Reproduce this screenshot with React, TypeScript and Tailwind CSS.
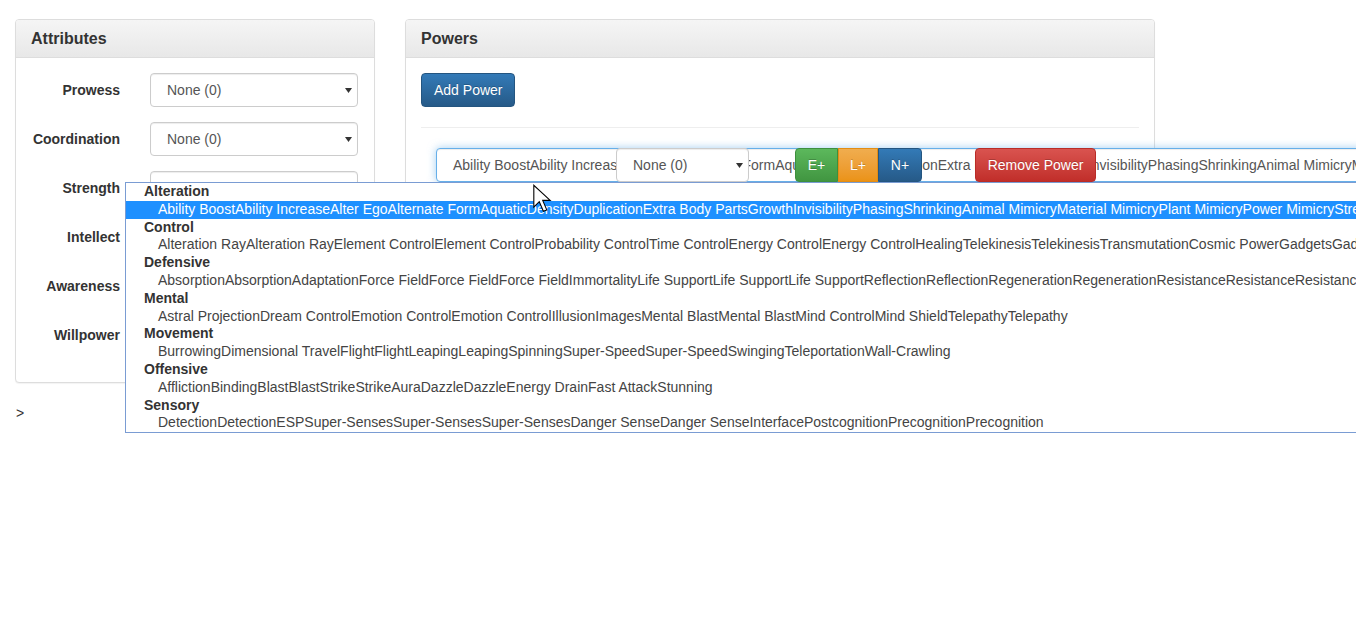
import React from "react";

const attrs = ["Prowess", "Coordination", "Strength", "Intellect", "Awareness", "Willpower"];

const groups: { label: string; items: string }[] = [
  {
    label: "Alteration",
    items:
      "Ability BoostAbility IncreaseAlter EgoAlternate FormAquaticDensityDuplicationExtra Body PartsGrowthInvisibilityPhasingShrinkingAnimal MimicryMaterial MimicryPlant MimicryPower MimicryStretchingSize ChangeTransformation",
  },
  {
    label: "Control",
    items:
      "Alteration RayAlteration RayElement ControlElement ControlProbability ControlTime ControlEnergy ControlEnergy ControlHealingTelekinesisTelekinesisTransmutationCosmic PowerGadgetsGadgetsGadgets",
  },
  {
    label: "Defensive",
    items:
      "AbsorptionAbsorptionAdaptationForce FieldForce FieldForce FieldImmortalityLife SupportLife SupportLife SupportReflectionReflectionRegenerationRegenerationResistanceResistanceResistanceResistance",
  },
  {
    label: "Mental",
    items:
      "Astral ProjectionDream ControlEmotion ControlEmotion ControlIllusionImagesMental BlastMental BlastMind ControlMind ShieldTelepathyTelepathy",
  },
  {
    label: "Movement",
    items:
      "BurrowingDimensional TravelFlightFlightLeapingLeapingSpinningSuper-SpeedSuper-SpeedSwingingTeleportationWall-Crawling",
  },
  {
    label: "Offensive",
    items: "AfflictionBindingBlastBlastStrikeStrikeAuraDazzleDazzleEnergy DrainFast AttackStunning",
  },
  {
    label: "Sensory",
    items:
      "DetectionDetectionESPSuper-SensesSuper-SensesSuper-SensesDanger SenseDanger SenseInterfacePostcognitionPrecognitionPrecognition",
  },
];

function Caret() {
  return (
    <svg width="7" height="5" viewBox="0 0 7 5" className="block">
      <path d="M0 0 L7 0 L3.5 5 Z" fill="#333" />
    </svg>
  );
}

function SelectBox({ className = "" }: { className?: string }) {
  return (
    <div
      className={`h-[34px] bg-white border border-[#ccc] rounded-[4px] flex items-center pl-[16px] pr-[5px] text-[#555] shadow-[inset_0_1px_1px_rgba(0,0,0,0.075)] ${className}`}
    >
      <span className="flex-1 whitespace-nowrap">None (0)</span>
      <Caret />
    </div>
  );
}

function PanelHeader({ title }: { title: string }) {
  return (
    <div className="h-[38px] px-[15px] flex items-center bg-linear-to-b from-[#f5f5f5] to-[#e8e8e8] border-b border-[#ddd] rounded-t-[3px]">
      <h3 className="text-[16px] font-bold text-[#333] leading-none">{title}</h3>
    </div>
  );
}

export default function App() {
  return (
    <div
      className="relative w-[1356px] h-[618px] overflow-hidden bg-white text-[14px] text-[#333]"
      style={{ fontFamily: '"Liberation Sans", Arial, sans-serif' }}
    >
      <div className="flex gap-[30px] pt-[19px] pl-[15px] items-start">
        {/* Attributes column */}
        <div className="w-[360px] flex flex-col">
          <div className="border border-[#ddd] rounded-[4px] bg-white shadow-[0_1px_1px_rgba(0,0,0,0.05)]">
            <PanelHeader title="Attributes" />
            <div className="pt-[15px] px-[15px] pb-[30px] flex flex-col gap-[15px]">
              {attrs.map((a) => (
                <div key={a} className="flex items-center h-[34px]">
                  <label className="w-[89px] text-right font-bold text-[#333]">{a}</label>
                  <div className="w-[30px]" />
                  <SelectBox className="w-[208px]" />
                </div>
              ))}
            </div>
          </div>
          <div className="mt-[20px] pl-[1px] leading-[20px]">&gt;</div>
        </div>

        {/* Powers column */}
        <div className="w-[750px] border border-[#ddd] rounded-[4px] bg-white shadow-[0_1px_1px_rgba(0,0,0,0.05)]">
          <PanelHeader title="Powers" />
          <div className="p-[15px]">
            <button className="h-[34px] px-[12px] rounded-[4px] border border-[#245580] bg-linear-to-b from-[#337ab7] to-[#265a88] text-white [text-shadow:0_-1px_0_rgba(0,0,0,0.2)]">
              Add Power
            </button>
            <div className="mt-[20px] mb-[20px] h-px bg-[#eee]" />
            <div className="relative ml-[15px] h-[34px]">
              <div className="w-[1100px] h-[34px] border border-[#66afe9] rounded-[4px] bg-white flex items-center pl-[16px] whitespace-nowrap overflow-hidden text-[#555] shadow-[inset_0_1px_1px_rgba(0,0,0,0.075),0_0_8px_rgba(102,175,233,0.6)]">
                Ability BoostAbility IncreaseAlter EgoAlternate FormAquaticDensityDuplicationExtra Body PartsGrowthInvisibilityPhasingShrinkingAnimal MimicryMaterial MimicryPlant MimicryPower MimicryStretching
              </div>
              <SelectBox className="absolute left-[180px] top-0 w-[133px]" />
              <div className="absolute left-[359px] top-0 flex h-[34px]">
                <button className="w-[43px] h-[34px] rounded-l-[4px] border border-[#3e8f3e] bg-linear-to-b from-[#5cb85c] to-[#419641] text-white [text-shadow:0_-1px_0_rgba(0,0,0,0.2)]">
                  E+
                </button>
                <button className="w-[40px] h-[34px] border border-[#e38d13] bg-linear-to-b from-[#f0ad4e] to-[#eb9316] text-white [text-shadow:0_-1px_0_rgba(0,0,0,0.2)]">
                  L+
                </button>
                <button className="w-[44px] h-[34px] rounded-r-[4px] border border-[#245580] bg-linear-to-b from-[#337ab7] to-[#265a88] text-white [text-shadow:0_-1px_0_rgba(0,0,0,0.2)]">
                  N+
                </button>
              </div>
              <button className="absolute left-[539px] top-0 w-[121px] h-[34px] rounded-[4px] border border-[#b92c28] bg-linear-to-b from-[#d9534f] to-[#c12e2a] text-white [text-shadow:0_-1px_0_rgba(0,0,0,0.2)]">
                Remove Power
              </button>
            </div>
          </div>
        </div>
      </div>

      {/* Open native dropdown list */}
      <div className="absolute left-[125px] top-[182px] w-[1300px] border border-[#7a9cd3] bg-white">
        {groups.map((g, gi) => (
          <React.Fragment key={g.label}>
            <div className="h-[17.8px] leading-[17.8px] pl-[18px] font-bold text-[#333] whitespace-nowrap">
              {g.label}
            </div>
            <div
              className={`h-[17.8px] leading-[17.8px] pl-[32px] whitespace-nowrap overflow-hidden ${
                gi === 0 ? "bg-[#1e90ff] text-white" : "text-[#444]"
              }`}
            >
              {g.items}
            </div>
          </React.Fragment>
        ))}
      </div>

      {/* Mouse cursor */}
      <svg
        className="absolute left-[532px] top-[184px]"
        width="20"
        height="30"
        viewBox="0 0 14 22"
      >
        <path
          d="M1 1 L1 17 L5 13 L8 20 L10.5 19 L7.5 12 L13 12 Z"
          fill="#fff"
          stroke="#000"
          strokeWidth="0.8"
          strokeLinejoin="miter"
        />
      </svg>
    </div>
  );
}
